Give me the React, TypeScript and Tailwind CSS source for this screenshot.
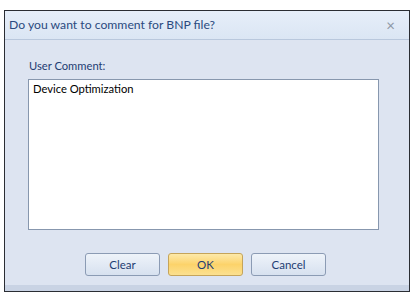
import React from "react";

export default function App() {
  const font = { fontFamily: 'Lato, "Noto Sans", sans-serif' };
  return (
    <div className="w-[419px] h-[301px] bg-white pt-[10px] pl-[4px]" style={font}>
      <div className="w-[406px] h-[282px] border border-[#2a2d33] bg-[#dde4f1] flex flex-col">
        <div className="h-[29px] bg-gradient-to-b from-[#e6eef9] to-[#dbe6f4] border-b border-[#b9c8dd] flex items-center pl-[4px] pr-[14px]">
          <span className="text-[12.2px] text-[#2b4a80] flex-1 leading-none">Do you want to comment for BNP file?</span>
          <span className="text-[#8d97a6] text-[15px] leading-none">×</span>
        </div>
        <div className="flex-1 flex flex-col pl-[24px] pt-[20px]">
          <div className="text-[11.2px] text-[#1e3d73] leading-none h-[19px]">User Comment:</div>
          <div className="-ml-[1px] w-[351px] h-[151px] bg-white border border-[#8797ae] px-[4px] pt-[1px] text-[11.2px] text-black">
            Device Optimization
          </div>
          <div className="flex gap-[8px] mt-[23px] ml-[56px]">
            <button className="w-[75px] h-[23px] rounded-[3px] border border-[#8b9bb4] bg-gradient-to-b from-[#eef3fa] to-[#d7e1ef] text-[11.5px] text-[#1e3d73]">Clear</button>
            <button className="w-[75px] h-[23px] rounded-[3px] border border-[#c5a45a] bg-gradient-to-b from-[#fde9a8] via-[#fcd36a] to-[#fbe08f] text-[11.5px] text-[#1e3d73]">OK</button>
            <button className="w-[75px] h-[23px] rounded-[3px] border border-[#8b9bb4] bg-gradient-to-b from-[#eef3fa] to-[#d7e1ef] text-[11.5px] text-[#1e3d73]">Cancel</button>
          </div>
        </div>
        <div className="h-[6px] bg-[#c9d3e4]" />
      </div>
    </div>
  );
}
